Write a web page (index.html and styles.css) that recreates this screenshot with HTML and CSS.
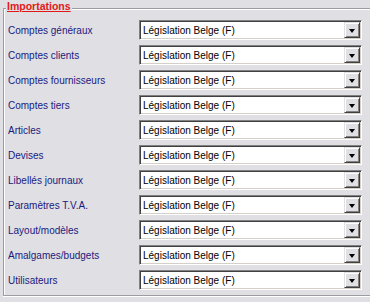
FILE: index.html
```html
<!DOCTYPE html>
<html lang="fr">
<head>
  <meta charset="UTF-8">
  <title>Importations</title>
  <link rel="stylesheet" href="styles.css">
</head>
<body>
  <fieldset class="group">
    <legend>Importations</legend>

    <div class="row"><span class="label">Comptes généraux</span><div class="combo"><span class="value">Législation Belge (F)</span><span class="btn"></span></div></div>
    <div class="row"><span class="label">Comptes clients</span><div class="combo"><span class="value">Législation Belge (F)</span><span class="btn"></span></div></div>
    <div class="row"><span class="label">Comptes fournisseurs</span><div class="combo"><span class="value">Législation Belge (F)</span><span class="btn"></span></div></div>
    <div class="row"><span class="label">Comptes tiers</span><div class="combo"><span class="value">Législation Belge (F)</span><span class="btn"></span></div></div>
    <div class="row"><span class="label">Articles</span><div class="combo"><span class="value">Législation Belge (F)</span><span class="btn"></span></div></div>
    <div class="row"><span class="label">Devises</span><div class="combo"><span class="value">Législation Belge (F)</span><span class="btn"></span></div></div>
    <div class="row"><span class="label">Libellés journaux</span><div class="combo"><span class="value">Législation Belge (F)</span><span class="btn"></span></div></div>
    <div class="row"><span class="label">Paramètres T.V.A.</span><div class="combo"><span class="value">Législation Belge (F)</span><span class="btn"></span></div></div>
    <div class="row"><span class="label">Layout/modèles</span><div class="combo"><span class="value">Législation Belge (F)</span><span class="btn"></span></div></div>
    <div class="row"><span class="label">Amalgames/budgets</span><div class="combo"><span class="value">Législation Belge (F)</span><span class="btn"></span></div></div>
    <div class="row"><span class="label">Utilisateurs</span><div class="combo"><span class="value">Législation Belge (F)</span><span class="btn"></span></div></div>
  </fieldset>
</body>
</html>
```

FILE: styles.css
```css
html, body {
  margin: 0;
  height: 100%;
  overflow: hidden;
  background-color: #e0dfe3;
}
body {
  font-family: "Liberation Sans", Arial, sans-serif;
  font-size: 10px;
}
.group {
  box-sizing: border-box;
  min-width: 0;
  margin: 0 0 0 3px;
  padding: 4px 0 5px 4px;
  border: 1px solid #9d9ca1;
  border-right: none;
  box-shadow: 0 1px 0 #fff, inset 1px 1px 0 #fff;
  display: flex;
  flex-direction: column;
  gap: 5px;
}
.group legend {
  margin-left: -2px;
  padding: 0 1px 4px;
  line-height: 12px;
  font-size: 10.5px;
  font-weight: bold;
  color: #e01818;
  text-decoration: underline;
  background-color: #e0dfe3;
}
.row {
  display: flex;
  align-items: center;
  height: 20px;
}
.label {
  width: 131px;
  color: #1a1a80;
}
.combo {
  box-sizing: border-box;
  width: 223px;
  height: 20px;
  display: flex;
  align-items: center;
  background-color: #fff;
  border: 1px solid;
  border-color: #808080 #fff #fff #808080;
  box-shadow: inset 1px 1px 0 #404040, inset -1px -1px 0 #d4d0c8;
  padding: 1px;
}
.value {
  flex: 1;
  padding-left: 2px;
  color: #000;
}
.btn {
  box-sizing: border-box;
  width: 16px;
  height: 16px;
  position: relative;
  background-color: #e0dfe3;
  border: 1px solid;
  border-color: #e0dfe3 #404040 #404040 #e0dfe3;
  box-shadow: inset 1px 1px 0 #fff, inset -1px -1px 0 #808080;
}
.btn::after {
  content: "";
  position: absolute;
  left: 4px;
  top: 6px;
  border-left: 3.5px solid transparent;
  border-right: 3.5px solid transparent;
  border-top: 4px solid #000;
}
```
